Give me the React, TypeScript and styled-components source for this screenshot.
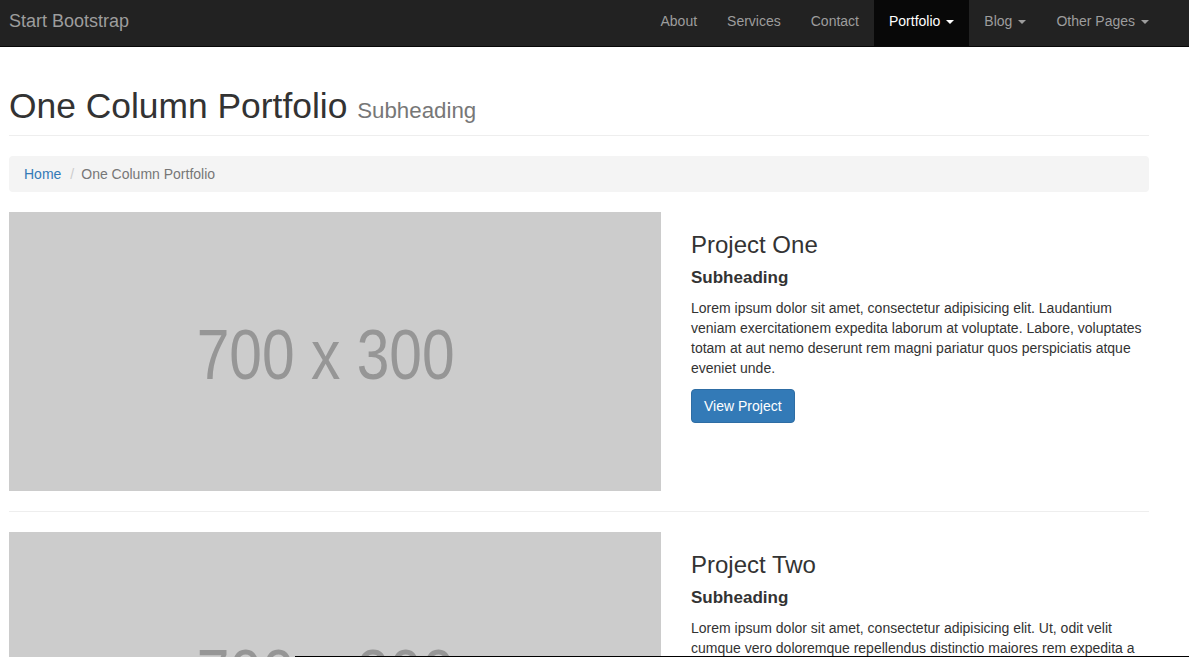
import React from "react";
import styled, { createGlobalStyle } from "styled-components";

const Global = createGlobalStyle`
  * { box-sizing: border-box; }
  html, body { margin: 0; padding: 0; background: #fff; }
  body {
    font-family: "Liberation Sans", Arial, Helvetica, sans-serif;
    font-size: 14px;
    line-height: 1.42857;
    color: #333;
    overflow: hidden;
  }
`;

const Navbar = styled.nav`
  height: 47px;
  background: #222;
  border-bottom: 1px solid #080808;
`;

const NavInner = styled.div`
  width: 1170px;
  margin-left: -6px;
  padding: 0 15px;
  height: 46px;
  display: flex;
  align-items: stretch;
  justify-content: space-between;
`;

const Brand = styled.a`
  margin-left: -15px;
  padding: 0 15px;
  font-size: 18px;
  line-height: 43px;
  color: #9d9d9d;
  text-decoration: none;
`;

const NavList = styled.ul`
  list-style: none;
  margin: 0 -15px 0 0;
  padding: 0;
  display: flex;
`;

const NavItem = styled.li<{ $active?: boolean }>`
  padding: 0 15px 2px;
  color: ${(p) => (p.$active ? "#fff" : "#9d9d9d")};
  background: ${(p) => (p.$active ? "#080808" : "transparent")};
  display: flex;
  align-items: center;
  gap: 4px;
`;

const Caret = styled.span`
  display: inline-block;
  width: 0;
  height: 0;
  margin-left: 2px;
  border-top: 4px solid currentColor;
  border-left: 4px solid transparent;
  border-right: 4px solid transparent;
`;

const Container = styled.main`
  width: 1170px;
  margin-left: -6px;
  padding: 0 15px;
`;

const PageHeader = styled.div`
  margin: 40px 0 20px;
  padding-bottom: 9px;
  border-bottom: 1px solid #eee;
`;

const H1 = styled.h1`
  margin: 0;
  font-size: 35.4px;
  font-weight: 500;
  line-height: 1.1;
  color: #333;
`;

const Small = styled.small`
  font-size: 63%;
  font-weight: 400;
  color: #777;
`;

const Breadcrumb = styled.ol`
  list-style: none;
  margin: 0 0 20px;
  padding: 9px 15px 7px;
  background: #f4f4f4;
  border-radius: 4px;
  display: flex;
  height: 36px;
`;

const Crumb = styled.li<{ $active?: boolean }>`
  color: ${(p) => (p.$active ? "#777" : "#337ab7")};
`;

const Separator = styled.li`
  padding: 0 7px 0 9px;
  color: #ccc;
`;

const Row = styled.section`
  display: flex;
  gap: 30px;
`;

const ImageCol = styled.div`
  width: 652px;
  flex: none;
`;

const Placeholder = styled.svg`
  display: block;
  width: 100%;
  height: 279px;
`;

const TextCol = styled.div`
  flex: 1;
`;

const H3 = styled.h3`
  margin: 20px 0 10px;
  font-size: 24px;
  font-weight: 500;
  line-height: 1.1;
`;

const H4 = styled.h4`
  margin: 10px 0 11px;
  font-size: 17px;
  font-weight: 700;
  line-height: 19.8px;
`;

const P = styled.p`
  margin: 0 0 10px;
`;

const Button = styled.a`
  display: inline-block;
  padding: 6px 12px;
  font-size: 14px;
  line-height: 20px;
  color: #fff;
  background: #337ab7;
  border: 1px solid #2e6da4;
  border-radius: 4px;
  text-decoration: none;
`;

const Hr = styled.hr`
  margin: 20px 0;
  border: 0;
  border-top: 1px solid #eee;
`;

const BottomEdge = styled.div`
  position: fixed;
  left: 295px;
  right: 0;
  bottom: 0;
  height: 1px;
  background: #000;
`;

const ImagePlaceholder = () => (
  <Placeholder viewBox="0 0 700 300" preserveAspectRatio="none">
    <rect width="700" height="300" fill="#ccc" />
    <text
      x="340"
      y="180"
      textAnchor="middle"
      fontFamily="'Liberation Sans', Arial, sans-serif"
      fontSize="76"
      fill="#969696"
      textLength="277"
      lengthAdjust="spacingAndGlyphs"
    >
      700 x 300
    </text>
  </Placeholder>
);

const projects = [
  {
    title: "Project One",
    text: "Lorem ipsum dolor sit amet, consectetur adipisicing elit. Laudantium veniam exercitationem expedita laborum at voluptate. Labore, voluptates totam at aut nemo deserunt rem magni pariatur quos perspiciatis atque eveniet unde.",
  },
  {
    title: "Project Two",
    text: "Lorem ipsum dolor sit amet, consectetur adipisicing elit. Ut, odit velit cumque vero doloremque repellendus distinctio maiores rem expedita a nam vitae modi quidem similique ducimus! Velit, esse totam tempore.",
  },
];

export default function App() {
  return (
    <>
      <Global />
      <Navbar>
        <NavInner>
          <Brand href="#">Start Bootstrap</Brand>
          <NavList>
            <NavItem>About</NavItem>
            <NavItem>Services</NavItem>
            <NavItem>Contact</NavItem>
            <NavItem $active>
              Portfolio <Caret />
            </NavItem>
            <NavItem>
              Blog <Caret />
            </NavItem>
            <NavItem>
              Other Pages <Caret />
            </NavItem>
          </NavList>
        </NavInner>
      </Navbar>
      <Container>
        <PageHeader>
          <H1>
            One Column Portfolio <Small>Subheading</Small>
          </H1>
        </PageHeader>
        <Breadcrumb>
          <Crumb>Home</Crumb>
          <Separator>/</Separator>
          <Crumb $active>One Column Portfolio</Crumb>
        </Breadcrumb>
        {projects.map((p, i) => (
          <React.Fragment key={p.title}>
            {i > 0 && <Hr />}
            <Row>
              <ImageCol>
                <ImagePlaceholder />
              </ImageCol>
              <TextCol>
                <H3>{p.title}</H3>
                <H4>Subheading</H4>
                <P>{p.text}</P>
                <Button href="#">View Project</Button>
              </TextCol>
            </Row>
          </React.Fragment>
        ))}
      </Container>
      <BottomEdge />
    </>
  );
}
